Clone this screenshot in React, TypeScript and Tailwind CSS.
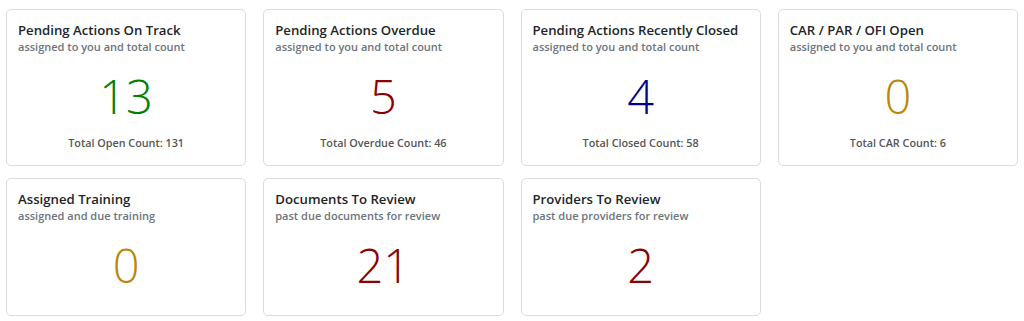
const cards = [
  {
    title: "Pending Actions On Track",
    sub: "assigned to you and total count",
    value: 13,
    color: "text-[#008000]",
    footer: "Total Open Count: 131",
  },
  {
    title: "Pending Actions Overdue",
    sub: "assigned to you and total count",
    value: 5,
    color: "text-[#8b0000]",
    footer: "Total Overdue Count: 46",
  },
  {
    title: "Pending Actions Recently Closed",
    sub: "assigned to you and total count",
    value: 4,
    color: "text-[#00008b]",
    footer: "Total Closed Count: 58",
  },
  {
    title: "CAR / PAR / OFI Open",
    sub: "assigned to you and total count",
    value: 0,
    color: "text-[#b8860b]",
    footer: "Total CAR Count: 6",
  },
  {
    title: "Assigned Training",
    sub: "assigned and due training",
    value: 0,
    color: "text-[#b8860b]",
  },
  {
    title: "Documents To Review",
    sub: "past due documents for review",
    value: 21,
    color: "text-[#8b0000]",
  },
  {
    title: "Providers To Review",
    sub: "past due providers for review",
    value: 2,
    color: "text-[#8b0000]",
  },
];

interface StatCardProps {
  title: string;
  sub: string;
  value: number;
  color: string;
  footer?: string;
}

function StatCard({ title, sub, value, color, footer }: StatCardProps) {
  return (
    <div className="flex flex-col rounded-[5px] border border-[#dcdcdc] bg-white px-[11px] pt-[11px] pb-[14px]">
      <h3 className="text-[13.2px] leading-[18px] font-semibold whitespace-nowrap text-[#212529]">
        {title}
      </h3>
      <p className="text-[11px] leading-[16px] font-semibold whitespace-nowrap text-[#6c757d]">
        {sub}
      </p>
      <div
        className={`mt-[17px] text-center text-[47px] leading-[48px] font-light ${color}`}
      >
        {value}
      </div>
      {footer ? (
        <div className="mt-[15px] text-center text-[10.8px] leading-[16px] font-semibold text-[#555]">
          {footer}
        </div>
      ) : (
        <div className="h-[12px]" />
      )}
    </div>
  );
}

export default function App() {
  return (
    <div
      className="min-h-[321px] bg-white px-[6px] pt-[9px]"
      style={{ fontFamily: '"Open Sans", "Noto Sans", sans-serif' }}
    >
      <div className="grid grid-cols-4 gap-x-[17px] gap-y-[12px]">
        {cards.map((c) => (
          <StatCard key={c.title} {...c} />
        ))}
      </div>
    </div>
  );
}
